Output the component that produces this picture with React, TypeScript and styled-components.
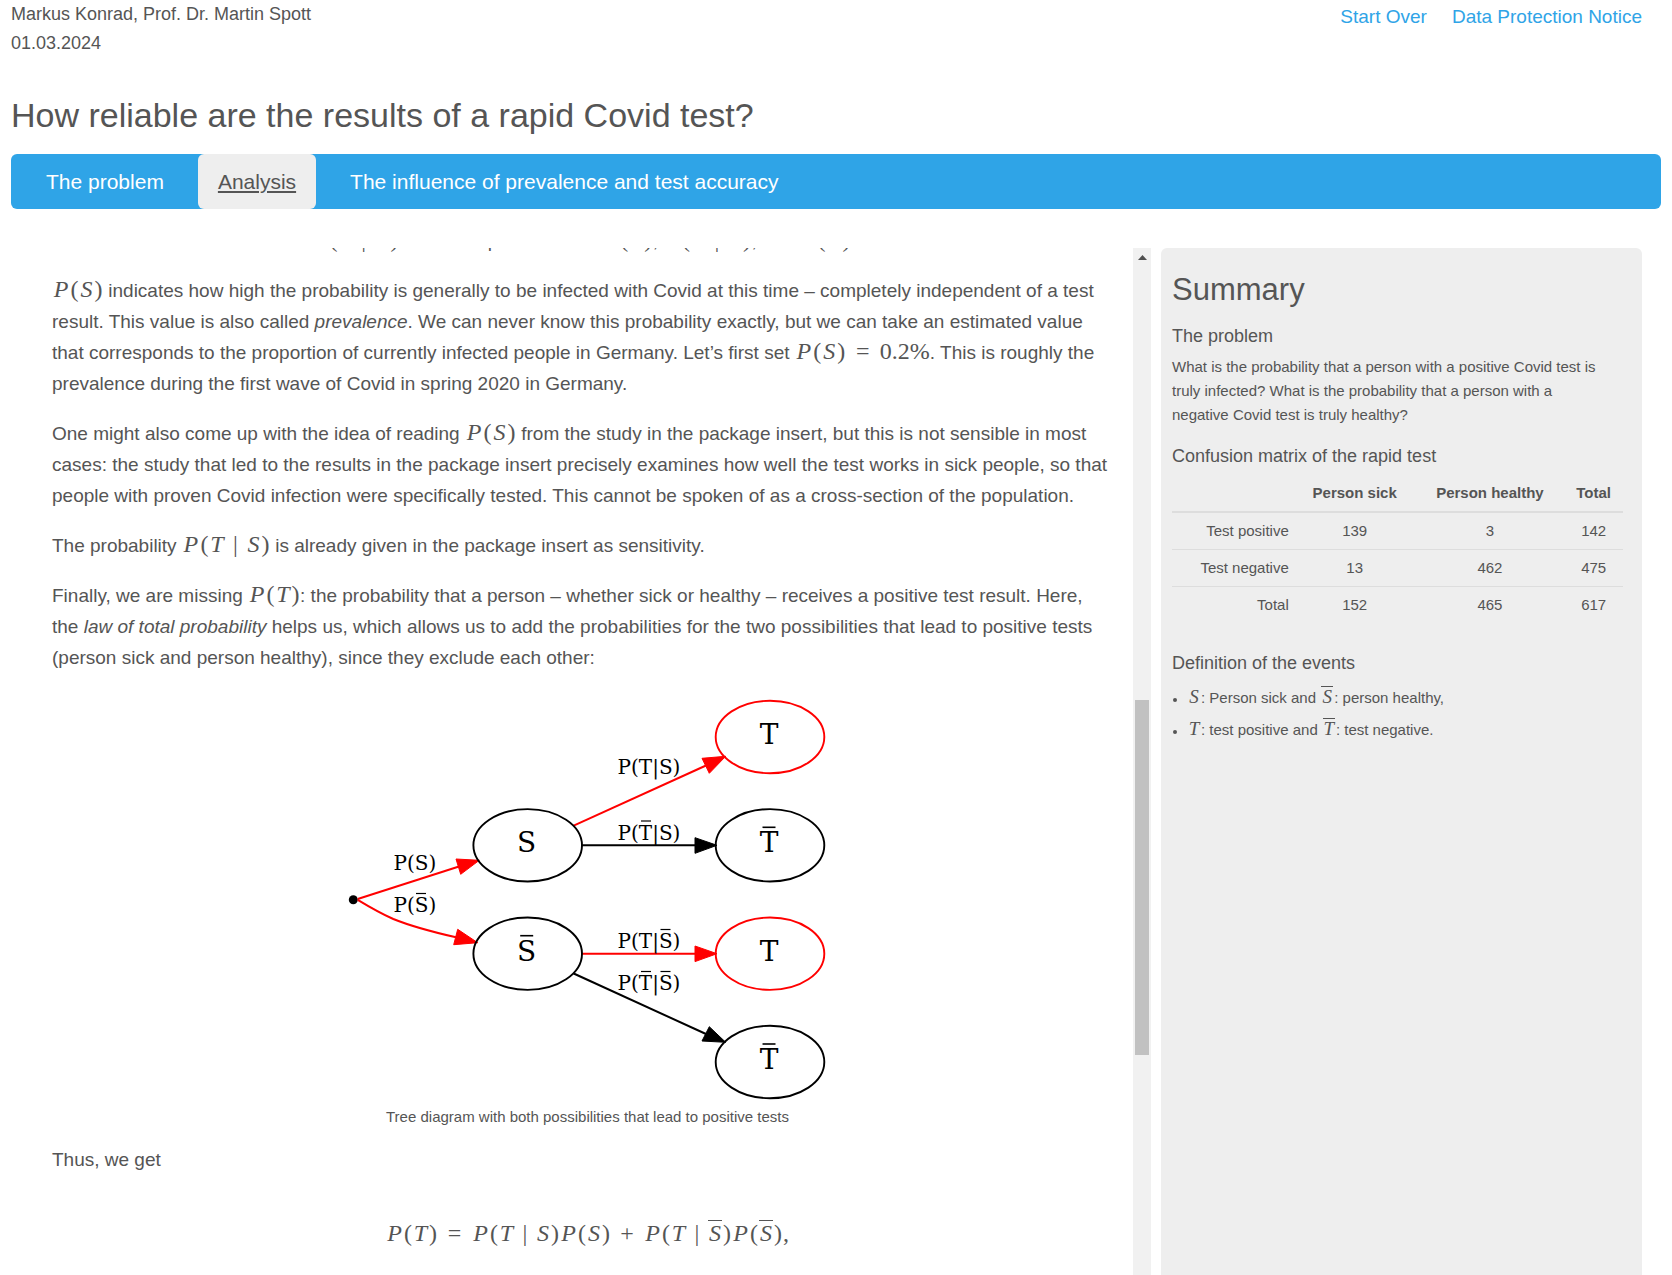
import React from "react";
import styled, { createGlobalStyle } from "styled-components";

const ink = "#555555";
const blue = "#2fa4e7";
const panel = "#eeeeee";

const GlobalStyle = createGlobalStyle`
  *, *::before, *::after { box-sizing: border-box; }
  body {
    margin: 0;
    background: #ffffff;
    color: ${ink};
    font-family: "Liberation Sans", Arial, Helvetica, sans-serif;
    font-size: 19px;
    line-height: 31px;
  }
`;

const Page = styled.div`
  display: flex;
  flex-direction: column;
  height: 100vh;
  padding: 0 11px;
  overflow: hidden;
`;

const TopBar = styled.header`
  display: flex;
  justify-content: space-between;
  align-items: flex-start;
  padding-right: 19px;
`;

const Byline = styled.div`
  font-size: 18px;
  line-height: 29px;
`;

const TopLinks = styled.nav`
  display: flex;
  gap: 25px;
  padding-top: 1px;
`;

const TopLink = styled.a`
  color: ${blue};
  text-decoration: none;
`;

const Title = styled.h1`
  margin: 36px 0 18px;
  font-size: 34px;
  font-weight: 400;
  line-height: 42px;
`;

const Tabs = styled.nav`
  display: flex;
  flex: none;
  border-radius: 6px;
  background: ${blue};
  padding-left: 15px;
  gap: 14px;
`;

const Tab = styled.a<{ $active?: boolean }>`
  padding: 12px 20px;
  border-radius: 6px;
  font-size: 21px;
  line-height: 31px;
  color: ${(p) => (p.$active ? ink : "#ffffff")};
  background: ${(p) => (p.$active ? panel : "transparent")};
  text-decoration: ${(p) => (p.$active ? "underline" : "none")};
`;

const Columns = styled.main`
  display: grid;
  grid-template-columns: minmax(0, 1140fr) minmax(0, 481fr);
  gap: 10px;
  flex: 1;
  min-height: 0;
  margin-top: 39px;
  padding-right: 19px;
`;

const Reader = styled.section`
  display: flex;
  min-height: 0;
  overflow: hidden;
`;

const Article = styled.article`
  flex: 1;
  min-width: 0;
  margin-top: -23px;
  padding: 0 10px 0 41px;
`;

const Text = styled.p<{ $center?: boolean }>`
  margin: 0 0 19px;
  padding-right: 13px;
  text-align: ${(p) => (p.$center ? "center" : "left")};
`;

const Figure = styled.figure`
  display: flex;
  flex-direction: column;
  align-items: center;
  margin: 0 0 15px;
  padding-top: 1px;
`;

const Caption = styled.figcaption`
  font-size: 15px;
  line-height: 24px;
`;

const Display = styled.div`
  display: flex;
  justify-content: center;
  padding: 26px 0;
`;

const ScrollBar = styled.div`
  display: flex;
  flex-direction: column;
  align-items: center;
  width: 18px;
  background: #f1f1f1;
`;

const ScrollButton = styled.button`
  display: flex;
  align-items: center;
  justify-content: center;
  width: 18px;
  height: 18px;
  padding: 0;
  border: 0;
  background: transparent;
`;

const ScrollSpace = styled.div<{ $share: number }>`
  flex: ${(p) => p.$share};
`;

const ScrollThumb = styled.div`
  flex: 355;
  width: 14px;
  background: #c1c1c1;
`;

const Summary = styled.aside`
  border-radius: 6px 6px 0 0;
  background: ${panel};
  padding: 24px 19px 0 11px;
  font-size: 15px;
  line-height: 24px;
  overflow: hidden;
`;

const SummaryTitle = styled.h2`
  margin: 0;
  font-size: 31px;
  font-weight: 400;
  line-height: 35px;
`;

const SummaryHeading = styled.h3`
  margin: 17px 0 7px;
  font-size: 18px;
  font-weight: 400;
  line-height: 24px;
`;

const SummaryText = styled.p`
  margin: 0;
  padding-right: 16px;
`;

const Matrix = styled.table`
  width: 100%;
  margin-bottom: 28px;
  border-collapse: collapse;
  table-layout: fixed;
`;

const HeadCell = styled.th<{ $share?: string }>`
  width: ${(p) => p.$share};
  padding: 6px 0;
  border-bottom: 2px solid #dddddd;
  text-align: center;
`;

const RowLabel = styled.th`
  padding: 6px 5px 6px 0;
  border-top: 1px solid #dddddd;
  font-weight: 400;
  text-align: right;
`;

const Cell = styled.td`
  padding: 6px 0;
  border-top: 1px solid #dddddd;
  text-align: center;
`;

const EventList = styled.ul`
  margin: 0;
  padding-left: 15px;
`;

const EventItem = styled.li`
  line-height: 32px;
  &::marker { font-size: 12px; }
`;

/* ---------- formulas ---------- */

const Formula = styled.span<{ $small?: boolean }>`
  display: inline-flex;
  align-items: baseline;
  font-family: "Liberation Serif", "Times New Roman", serif;
  font-size: ${(p) => (p.$small ? "19px" : "24px")};
  line-height: 20px;
  white-space: nowrap;
`;

const glyphWidth: Record<string, number> = {
  P: 18, S: 15, T: 16, "(": 9, ")": 9, "|": 21, "=": 34, "+": 33, ",": 7,
};

const Symbol = styled.span<{ $glyph: string; $small?: boolean }>`
  display: inline-block;
  width: ${(p) => (p.$small ? 14 : glyphWidth[p.$glyph])}px;
  text-align: center;
  font-style: ${(p) => (/[PST]/.test(p.$glyph) ? "italic" : "normal")};
`;

const Bar = styled.span<{ $small?: boolean }>`
  display: inline-block;
  padding: 0 1px;
  border-top: 1px solid ${ink};
  line-height: ${(p) => (p.$small ? "20px" : "24px")};
`;

/* A lower-case s or t stands for the complement of the event. */
function Tex({ src, small }: { src: string; small?: boolean }) {
  return (
    <Formula $small={small}>
      {src.split(/([PSTst()|=+,])/).filter(Boolean).map((part, i) => {
        const glyph = part === "s" || part === "t" ? part.toUpperCase() : part;
        if (!(glyph in glyphWidth)) return <span key={i}>{part}</span>;
        return (
          <Symbol key={i} $glyph={glyph} $small={small}>
            {glyph === part ? glyph : <Bar $small={small}>{glyph}</Bar>}
          </Symbol>
        );
      })}
    </Formula>
  );
}

/* ---------- tree diagram ---------- */

const Tree = styled.svg`
  display: block;
  max-width: 100%;
  font-family: "DejaVu Serif", serif;
`;

const red = "#ff0000";
const black = "#000000";

const nodes = [
  { x: 197.7, y: 155.3, name: "S", bar: false, color: black },
  { x: 197.7, y: 263.7, name: "S", bar: true, color: black },
  { x: 440, y: 47, name: "T", bar: false, color: red },
  { x: 440, y: 155.3, name: "T", bar: true, color: black },
  { x: 440, y: 263.7, name: "T", bar: false, color: red },
  { x: 440, y: 372, name: "T", bar: true, color: black },
];

const edges = [
  { d: "M27.7 209 L129 176.5", head: "149.3,170.3 126,169 130.7,184.3", color: red },
  { d: "M27.7 209.8 C38 216 50 223 63.3 229 C83 237 105 242.5 126 247.3", head: "147.7,252.7 127.7,239.3 123.7,254.7", color: red },
  { d: "M243.7 135.7 L376 75.5", head: "395.7,66.3 372,68.3 379.3,83.3", color: red },
  { d: "M252 155.3 H366", head: "387,155.3 365,147.7 365,163.3", color: black },
  { d: "M252 263.7 H366", head: "387,263.7 365,256 365,271.6", color: red },
  { d: "M243.7 283.5 L376 344", head: "395.7,352.3 379.3,336.7 372,351", color: black },
];

const labels = [
  { x: 85, y: 180, text: "P(S)", bars: [] },
  { x: 85, y: 222, text: "P(S)", bars: [86] },
  { x: 319, y: 83.5, text: "P(T|S)", bars: [] },
  { x: 319, y: 149.5, text: "P(T|S)", bars: [311] },
  { x: 319, y: 258, text: "P(T|S)", bars: [330.5] },
  { x: 319, y: 300, text: "P(T|S)", bars: [311, 330.5] },
];

function TreeDiagram() {
  return (
    <Tree width="493" height="412" viewBox="11 3 493 412" role="img" aria-label="Probability tree">
      <circle cx="23.3" cy="209.7" r="4.5" />
      {edges.map((e, i) => (
        <g key={i}>
          <path d={e.d} fill="none" stroke={e.color} strokeWidth="2" />
          <polygon points={e.head} fill={e.color} stroke={e.color} strokeWidth="1" />
        </g>
      ))}
      {nodes.map((n, i) => (
        <g key={i}>
          <ellipse cx={n.x} cy={n.y} rx="54.3" ry="36.2" fill="none" stroke={n.color} strokeWidth="1.9" />
          <text x={n.x - 1} y={n.y + 7} fontSize="28" textAnchor="middle">{n.name}</text>
          {n.bar && <path d={`M${n.x - 7.5} ${n.y - 18} h13`} stroke={black} strokeWidth="1.6" />}
        </g>
      ))}
      {labels.map((l, i) => (
        <g key={i}>
          <text x={l.x} y={l.y} fontSize="20" textAnchor="middle">{l.text}</text>
          {l.bars.map((x) => (
            <path key={x} d={`M${x} ${l.y - 18.5} h10`} stroke={black} strokeWidth="1.2" />
          ))}
        </g>
      ))}
    </Tree>
  );
}

const matrixRows = [
  ["Test positive", 139, 3, 142],
  ["Test negative", 13, 462, 475],
  ["Total", 152, 465, 617],
];

export default function App() {
  return (
    <Page>
      <GlobalStyle />
      <TopBar>
        <Byline>
          <div>Markus Konrad, Prof. Dr. Martin Spott</div>
          <div>01.03.2024</div>
        </Byline>
        <TopLinks>
          <TopLink href="#start">Start Over</TopLink>
          <TopLink href="#privacy">Data Protection Notice</TopLink>
        </TopLinks>
      </TopBar>
      <Title>How reliable are the results of a rapid Covid test?</Title>
      <Tabs>
        <Tab href="#problem">The problem</Tab>
        <Tab href="#analysis" $active>Analysis</Tab>
        <Tab href="#influence">The influence of prevalence and test accuracy</Tab>
      </Tabs>
      <Columns>
        <Reader>
          <Article>
            <Text $center>
              <Tex src="P(S|T)" /> to be computed via the <Tex src="P(S)" />, <Tex src="P(T|S)" />, and <Tex src="P(T)" />
            </Text>
            <Text>
              <Tex src="P(S)" /> indicates how high the probability is generally to be infected with Covid at this
              time – completely independent of a test result. This value is also called <em>prevalence</em>. We can
              never know this probability exactly, but we can take an estimated value that corresponds to the
              proportion of currently infected people in Germany. Let’s first set <Tex src="P(S)=0.2%" />. This is
              roughly the prevalence during the first wave of Covid in spring 2020 in Germany.
            </Text>
            <Text>
              One might also come up with the idea of reading <Tex src="P(S)" /> from the study in the package
              insert, but this is not sensible in most cases: the study that led to the results in the package
              insert precisely examines how well the test works in sick people, so that people with proven Covid
              infection were specifically tested. This cannot be spoken of as a cross-section of the population.
            </Text>
            <Text>
              The probability <Tex src="P(T|S)" /> is already given in the package insert as sensitivity.
            </Text>
            <Text>
              Finally, we are missing <Tex src="P(T)" />: the probability that a person – whether sick or healthy –
              receives a positive test result. Here, the <em>law of total probability</em> helps us, which allows us
              to add the probabilities for the two possibilities that lead to positive tests (person sick and person
              healthy), since they exclude each other:
            </Text>
            <Figure>
              <TreeDiagram />
              <Caption>Tree diagram with both possibilities that lead to positive tests</Caption>
            </Figure>
            <Text>Thus, we get</Text>
            <Display>
              <Tex src="P(T)=P(T|S)P(S)+P(T|s)P(s)," />
            </Display>
          </Article>
          <ScrollBar>
            <ScrollButton aria-label="Scroll up">
              <svg width="9" height="5" viewBox="0 0 9 5">
                <path d="M0 5 L4.5 0 L9 5 Z" fill="#505050" />
              </svg>
            </ScrollButton>
            <ScrollSpace $share={434} />
            <ScrollThumb />
            <ScrollSpace $share={220} />
          </ScrollBar>
        </Reader>
        <Summary>
          <SummaryTitle>Summary</SummaryTitle>
          <SummaryHeading>The problem</SummaryHeading>
          <SummaryText>
            What is the probability that a person with a positive Covid test is truly infected? What is the
            probability that a person with a negative Covid test is truly healthy?
          </SummaryText>
          <SummaryHeading>Confusion matrix of the rapid test</SummaryHeading>
          <Matrix>
            <thead>
              <tr>
                <HeadCell $share="27%" />
                <HeadCell $share="27%" scope="col">Person sick</HeadCell>
                <HeadCell $share="33%" scope="col">Person healthy</HeadCell>
                <HeadCell $share="13%" scope="col">Total</HeadCell>
              </tr>
            </thead>
            <tbody>
              {matrixRows.map(([label, ...values]) => (
                <tr key={label}>
                  <RowLabel scope="row">{label}</RowLabel>
                  {values.map((v, i) => (
                    <Cell key={i}>{v}</Cell>
                  ))}
                </tr>
              ))}
            </tbody>
          </Matrix>
          <SummaryHeading>Definition of the events</SummaryHeading>
          <EventList>
            <EventItem><Tex small src="S" />: Person sick and <Tex small src="s" />: person healthy,</EventItem>
            <EventItem><Tex small src="T" />: test positive and <Tex small src="t" />: test negative.</EventItem>
          </EventList>
        </Summary>
      </Columns>
    </Page>
  );
}
